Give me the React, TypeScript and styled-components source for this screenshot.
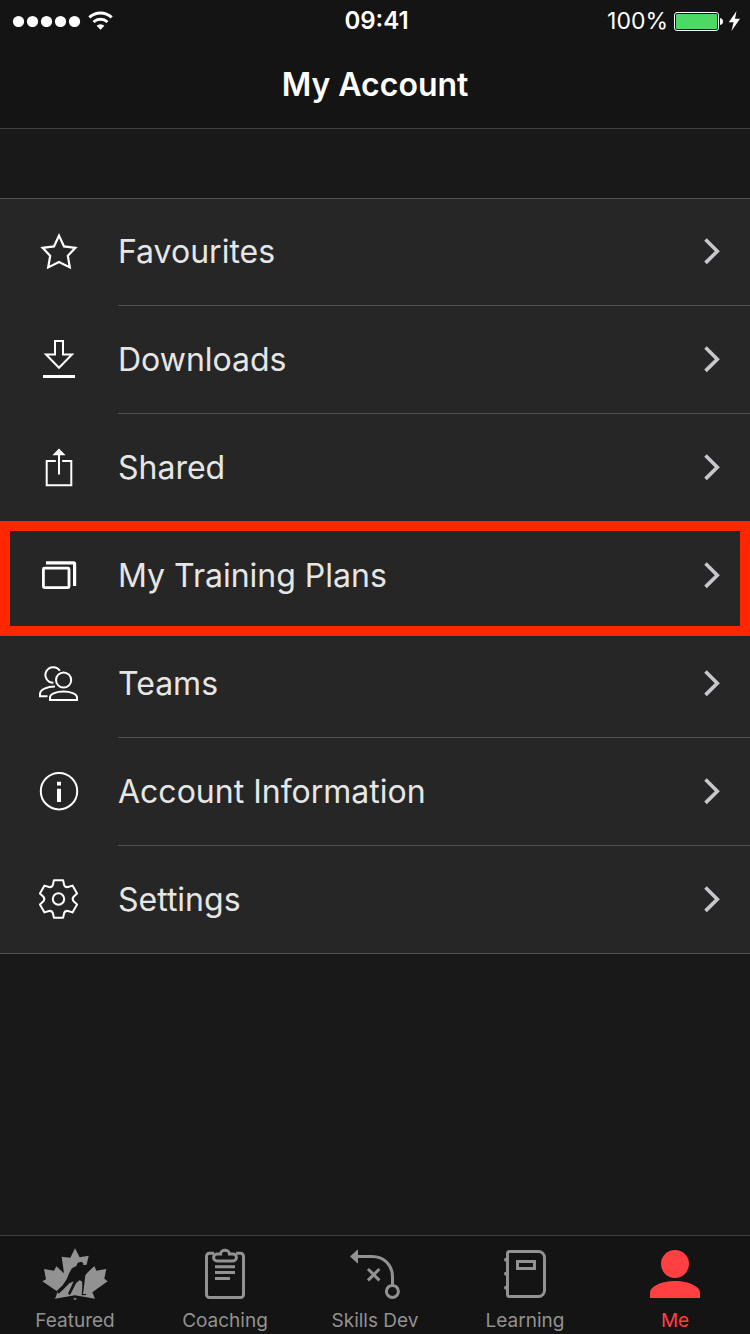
import React from "react";
import styled, { createGlobalStyle } from "styled-components";

const GlobalStyle = createGlobalStyle`
  *, *::before, *::after { box-sizing: border-box; }
  body {
    margin: 0;
    background: #191919;
    color: #e6e6e6;
    font-family: Inter, "Liberation Sans", sans-serif;
  }
`;

const Screen = styled.div`
  min-height: 100vh;
  display: flex;
  flex-direction: column;
`;

const TopBar = styled.header`
  background: #141414;
  border-bottom: 1px solid #3f3f3f;
  color: #fff;
`;

const StatusBar = styled.div`
  height: 40px;
  padding: 0 9px 0 12px;
  display: grid;
  grid-template-columns: 1fr auto 1fr;
  align-items: center;
  font-size: 23px;
  line-height: 42px;
`;

const StatusGroup = styled.div<{ $end?: boolean }>`
  display: flex;
  align-items: center;
  justify-content: ${(p) => (p.$end ? "flex-end" : "flex-start")};
  gap: 6px;
`;

const Clock = styled.time`
  font-weight: 600;
  font-size: 24px;
`;

const Title = styled.h1`
  margin: 0;
  height: 88px;
  line-height: 90px;
  text-align: center;
  font-size: 32px;
  font-weight: 600;
`;

const Main = styled.main`
  flex: 1;
  padding-top: 69px;
`;

const MenuList = styled.ul`
  list-style: none;
  margin: 0;
  padding: 0;
  background: #262626;
  box-shadow: inset 0 1px #515151, inset 0 -1px #515151;
`;

const MenuItem = styled.li<{ $highlighted?: boolean }>`
  position: relative;

  &::after {
    content: "";
    position: absolute;
    pointer-events: none;
    ${(p) =>
      p.$highlighted
        ? "inset: -1px 0 -6px; border: 10px solid #ff2600; z-index: 1;"
        : "left: 118px; right: 0; bottom: 0; height: 1px; background: #515151;"}
  }
`;

const MenuLink = styled.a`
  height: 108px;
  padding-right: 30px;
  display: grid;
  grid-template-columns: 118px 1fr auto;
  align-items: center;
  color: inherit;
  text-decoration: none;
  font-size: 32px;
  line-height: 40px;
`;

const LineIcon = styled.svg`
  width: 40px;
  height: 40px;
  justify-self: center;
  overflow: visible;
  fill: none;
  stroke: #fff;
  stroke-width: 2;
`;

const TabBar = styled.nav`
  height: 99px;
  background: #141414;
  border-top: 1px solid #3f3f3f;
  display: grid;
  grid-template-columns: repeat(5, 1fr);
`;

const Tab = styled.a<{ $active?: boolean }>`
  display: flex;
  flex-direction: column;
  align-items: center;
  padding-top: 9px;
  color: ${(p) => (p.$active ? "#ff4040" : "#929292")};
  text-decoration: none;
  font-size: 19px;
  line-height: 32px;
`;

const TabIcon = styled.svg`
  width: 70px;
  height: 60px;
  flex: none;
  fill: none;
  stroke: currentColor;
  stroke-width: 3;
`;

/* Six-toothed gear outline around the origin. */
const gearPath = (() => {
  const at = (x: number, y: number, deg: number) => {
    const r = (deg * Math.PI) / 180;
    const px = x * Math.cos(r) - y * Math.sin(r);
    const py = x * Math.sin(r) + y * Math.cos(r);
    return `${px.toFixed(2)} ${py.toFixed(2)}`;
  };
  let d = "";
  for (let k = 0; k < 6; k++) {
    const a = k * 60;
    d += `${k ? "L" : "M"}${at(-4.6, -18.8, a)}L${at(4.6, -18.8, a)}L${at(5.6, -14.2, a)}`;
    d += `Q${at(0, -13.2, a + 30)} ${at(-5.6, -14.2, a + 60)}`;
  }
  return d + "Z";
})();

type Item = { label: string; icon: React.ReactNode; highlighted?: boolean };

const items: Item[] = [
  {
    label: "Favourites",
    icon: (
      <path
        d="M20 3.6L25 14.4L36.4 15.8L28.8 23.8L30.8 35.4L20 30L9.2 35.4L11.2 23.8L3.6 15.8L15 14.4Z"
        strokeWidth="2.2"
      />
    ),
  },
  {
    label: "Downloads",
    icon: (
      <>
        <path d="M16 1h8v13.5h9L20 27.8L7 14.5h9z" />
        <path d="M4 36.5h32" strokeWidth="3" />
      </>
    ),
  },
  {
    label: "Shared",
    icon: (
      <>
        <path d="M16.8 13H7.7v24.2h24.6V13h-9.1" />
        <path d="M20 5v21.6" />
        <path d="M20 .5L26.6 7.2H13.4z" fill="#fff" stroke="none" />
      </>
    ),
  },
  {
    label: "My Training Plans",
    highlighted: true,
    icon: (
      <>
        <rect x="4.4" y="12.2" width="25.6" height="19.4" rx="1" strokeWidth="2.8" />
        <path d="M7 6.8h27.6q1 0 1 1V30" strokeWidth="3.2" />
      </>
    ),
  },
  {
    label: "Teams",
    icon: (
      <>
        <circle cx="24.6" cy="16" r="7.6" />
        <path d="M20.8 6.8A7.8 7.8 0 1 0 14.4 18.8" />
        <path d="M11 36v-2.4c0-4 7-6 13.5-6S38 29.6 38 33.6V36z" />
        <path d="M16 22.5C8 22.5 1 25.5 1 30v2.2h7.5" />
      </>
    ),
  },
  {
    label: "Account Information",
    icon: (
      <>
        <circle cx="20" cy="19.2" r="18.2" />
        <path d="M20 9.7v3.8M20 16.7v13.3" strokeWidth="4" />
      </>
    ),
  },
  {
    label: "Settings",
    icon: (
      <g transform="translate(19.5 19)">
        <path d={gearPath} strokeLinejoin="round" />
        <circle r="5.7" />
      </g>
    ),
  },
];

const tabs: { label: string; icon: React.ReactNode; active?: boolean }[] = [
  {
    label: "Featured",
    icon: (
      <g stroke="none" transform="translate(-40 -25) scale(.33333)">
        <path
          fill="currentColor"
          d="M225 85L239 112L266 107L260 134L268 150L283 138L289 152L319 147L313 176L323 184L277 217L285 236L225 226L165 236L173 215L127 184L138 178L132 147L162 152L169 139L192 160L185 110L211 113Z"
        />
        <path
          fill="#141414"
          d="M229 138L233 128L244 125L250 130L249 135L262 134L283 138L262 158L256 166L254 182L252 200L249 222L258 222L259 225L245 226L247 196L246 184L238 181L228 190L216 214L210 225L204 221L212 204L221 184L208 190L192 206L176 221L170 213L188 196L200 178L208 158L216 145Z"
        />
        <path fill="currentColor" d="M219 236L225 234L231 236L225 240Z" />
      </g>
    ),
  },
  {
    label: "Coaching",
    icon: (
      <>
        <path d="M24 8.2H19.5a3 3 0 0 0-3 3V49.5a3 3 0 0 0 3 3H50.5a3 3 0 0 0 3-3V11.2a3 3 0 0 0-3-3H46" />
        <path d="M30.6 9h-3.5a3.5 3.5 0 0 0 0 7h15.8a3.5 3.5 0 0 0 0-7h-3.5a4.4 3.8 0 0 0-8.8 0z" />
        <path d="M25 21.8h20M25 27.5h20M25 33.5h15" />
      </>
    ),
  },
  {
    label: "Skills Dev",
    icon: (
      <>
        <path d="M10 11.4L18 4.2V18.7z" fill="currentColor" stroke="none" />
        <path d="M17 11.4H32C44 11.4 52.5 20 52.5 32V40" />
        <circle cx="52.4" cy="46.4" r="6" />
        <path d="M28 24L39.4 35.4M39.4 24L28 35.4" />
      </>
    ),
  },
  {
    label: "Learning",
    icon: (
      <>
        <path d="M19.5 6.5H48.5a6 6 0 0 1 6 6V45.5a6 6 0 0 1-6 6H19.5a2 2 0 0 1-2-2V8.5a2 2 0 0 1 2-2z" />
        <rect x="27.5" y="16.5" width="17" height="7" />
        <g fill="currentColor" stroke="none">
          <circle cx="16" cy="14.7" r="2" />
          <circle cx="16" cy="28.7" r="2" />
          <circle cx="16" cy="42.7" r="2" />
        </g>
      </>
    ),
  },
  {
    label: "Me",
    active: true,
    icon: (
      <g fill="currentColor" stroke="none">
        <circle cx="35" cy="19" r="14" />
        <path d="M10 53V48C10 41 22 36 35 36S60 41 60 48V53z" />
      </g>
    ),
  },
];

function SignalDots() {
  return (
    <svg width="70" height="12" viewBox="0 0 70 12" fill="#fff" role="img" aria-label="Signal strength">
      {[0, 1, 2, 3, 4].map((n) => (
        <circle key={n} cx={6.5 + n * 14} cy="6.5" r="5.6" />
      ))}
    </svg>
  );
}

function Wifi() {
  return (
    <svg width="25" height="20" viewBox="0 0 25 20" fill="none" stroke="#fff" strokeWidth="3" role="img" aria-label="Wi-Fi">
      <path d="M1.3 6.4A16.5 16.5 0 0 1 23.7 6.4" />
      <path d="M5.5 11A10.5 10.5 0 0 1 19.5 11" />
      <path d="M12.5 18.8L8.6 14.8A5.6 5.6 0 0 1 16.4 14.8Z" fill="#fff" stroke="none" />
    </svg>
  );
}

function Battery() {
  return (
    <svg width="67" height="20" viewBox="0 0 67 20" role="img" aria-label="Battery charging">
      <rect x=".5" y="1.5" width="44" height="18" rx="2.5" fill="none" stroke="#fff" />
      <rect x="2" y="3" width="41" height="15" rx="1" fill="#4cd964" />
      <path d="M46 7q3 .5 3 3.5t-3 3.5z" fill="#fff" />
      <path d="M62.5 0L54.8 11.2H59.6L57.5 20L66 7.8H61z" fill="#fff" />
    </svg>
  );
}

function Chevron() {
  return (
    <svg width="18" height="28" viewBox="0 0 18 28" fill="none" stroke="#c7c7cc" strokeWidth="3.6" aria-hidden="true">
      <path d="M3.5 1.5L15.3 13.2L3.5 24.9" />
    </svg>
  );
}

export default function App() {
  return (
    <Screen>
      <GlobalStyle />
      <TopBar>
        <StatusBar>
          <StatusGroup>
            <SignalDots />
            <Wifi />
          </StatusGroup>
          <Clock>09:41</Clock>
          <StatusGroup $end>
            <span>100%</span>
            <Battery />
          </StatusGroup>
        </StatusBar>
        <Title>My Account</Title>
      </TopBar>
      <Main>
        <MenuList>
          {items.map((item) => (
            <MenuItem key={item.label} $highlighted={item.highlighted}>
              <MenuLink href="#">
                <LineIcon viewBox="0 0 40 40" aria-hidden="true">
                  {item.icon}
                </LineIcon>
                <span>{item.label}</span>
                <Chevron />
              </MenuLink>
            </MenuItem>
          ))}
        </MenuList>
      </Main>
      <TabBar>
        {tabs.map((tab) => (
          <Tab key={tab.label} href="#" $active={tab.active} aria-current={tab.active ? "page" : undefined}>
            <TabIcon viewBox="0 0 70 60" aria-hidden="true">
              {tab.icon}
            </TabIcon>
            <span>{tab.label}</span>
          </Tab>
        ))}
      </TabBar>
    </Screen>
  );
}
